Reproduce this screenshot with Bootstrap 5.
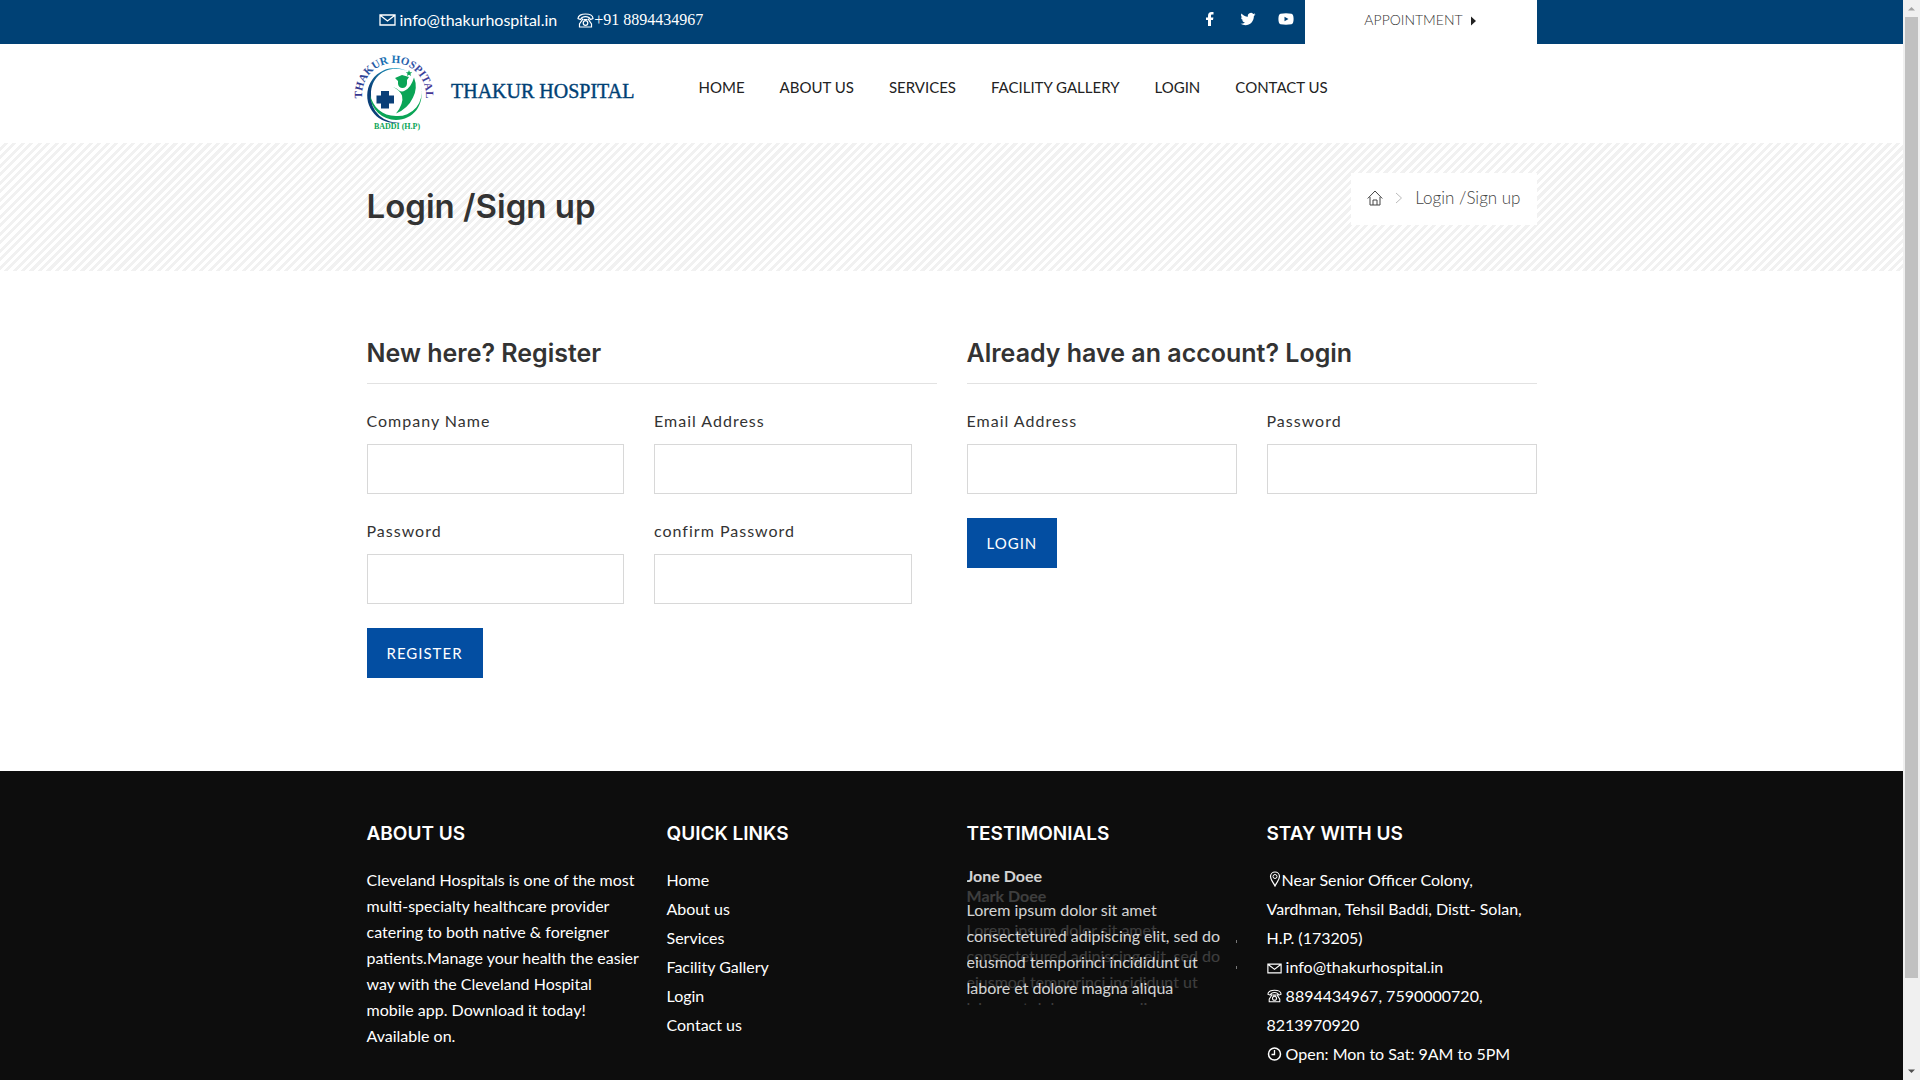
<!DOCTYPE html>
<html lang="en">
<head>
<meta charset="utf-8">
<meta name="viewport" content="width=device-width, initial-scale=1">
<title>Thakur Hospital - Login / Sign up</title>
<link href="https://cdn.jsdelivr.net/npm/bootstrap@5.3.0/dist/css/bootstrap.min.css" rel="stylesheet">
<style>
:root { --navy: #004175; --blue: #034ea2; --ink: #333; }
body { font-family: Lato, "Open Sans", sans-serif; font-size: 16px; line-height: 26px; color: var(--ink); padding-right: 17px; }
a { color: inherit; text-decoration: none; }
h1, h2, h3 { font-family: Inter, "Open Sans", sans-serif; font-weight: 600; margin: 0; }
.wrap { max-width: 1200px; padding-left: 15px; padding-right: 15px; }
.half { --bs-gutter-x: 30px; }
.topbar { background: var(--navy); color: #fff; height: 44px; line-height: 40px; }
.topbar .mail, .topbar .phone { height: 40px; }
.topbar .phone { font-family: "Liberation Serif", serif; }
.social { gap: 22px; padding-right: 11px; height: 38px; }
.appoint { background: #fff; color: var(--ink); width: 232px; height: 44px; font-size: 14px; font-weight: 300; }
.masthead { height: 99px; }
.brand { margin-left: -15px; width: 290px; }
.mainnav { gap: 35px; margin-left: 57px; padding-bottom: 14px; font-size: 15px; color: #222; }
.band { background: repeating-linear-gradient(135deg, #fff 0 3px, #f1f1f1 3px 6px); height: 128px; }
.band h1 { font-size: 33px; line-height: 40px; padding-top: 43px; }
.crumbs { background: #fff; height: 52px; margin-top: 30px; padding: 0 16px 2px; gap: 12px; font-size: 17px; font-weight: 300; color: #444; }
.forms { padding-top: 62px; padding-bottom: 93px; }
.forms h2 { font-size: 25px; line-height: 40px; padding-bottom: 10px; border-bottom: 1px solid #e2e2e2; margin-bottom: 24px; }
.forms label { display: block; font-size: 16px; letter-spacing: 1px; line-height: 26px; margin-bottom: 10px; }
.forms .form-control { border-radius: 0; border: 1px solid #d8d8d8; height: 50px; margin-bottom: 24px; }
.inset { padding-right: 25px; }
.act { background: var(--blue); color: #fff; border: 0; height: 50px; padding: 0 20px; font-size: 15px; letter-spacing: 1px; }
.foot { background: #0d0d0d; color: #fff; padding-top: 48px; padding-bottom: 12px; }
.foot h3 { font-size: 19px; line-height: 30px; margin-bottom: 18px; }
.foot .loose { line-height: 29px; margin: -2px 0 0; }
.foot .loose svg { vertical-align: -1px; }
.slides { position: relative; overflow: hidden; height: 139px; margin-top: -1px; }
.slide-item { opacity: .82; }
.slide-item b { display: block; line-height: 20px; margin-bottom: 11px; }
.ghost { position: absolute; top: 20px; left: 0; right: 0; opacity: .2; }
.upcoming { position: absolute; right: 0; width: 1px; height: 3px; background: #777; }
.upcoming.one { top: 74px; }
.upcoming.two { top: 100px; }
.rail { position: fixed; top: 0; right: 0; bottom: 0; width: 17px; background: #f0f0f0; padding: 0 2px; }
.rail .thumb { flex: 0 1 961px; background: #c1c1c1; }
.rail svg { margin-left: -2px; flex: none; }
</style>
<script src="https://cdn.jsdelivr.net/npm/bootstrap@5.3.0/dist/js/bootstrap.bundle.min.js"></script>
</head>
<body class="d-flex flex-column min-vh-100">
<svg width="0" height="0" class="position-absolute" aria-hidden="true">
  <symbol id="i-mail" viewBox="0 0 17 12"><path d="M1 1h15v10H1zM1.500 1.500l7 5.500 7-5.500" fill="none" stroke="currentColor" stroke-width="1.300"/></symbol>
  <symbol id="i-phone" viewBox="0 0 17 15"><path d="M1 5.500C1 2.500 4.500 1 8.500 1S16 2.500 16 5.500L13.500 6.500 12 4.500C10 3.500 7 3.500 5 4.500L3.500 6.500zM5.500 5.500v1L2.500 11v3h12v-3l-3-4.500v-1M6.500 6.500h4" fill="none" stroke="currentColor" stroke-width="1.200"/><circle cx="8.500" cy="10" r="2.300" fill="none" stroke="currentColor" stroke-width="1.200"/></symbol>
</svg>

<div class="topbar">
  <div class="container-fluid wrap d-flex">
    <a class="mail d-flex align-items-center ps-2" href="mailto:info@thakurhospital.in"><svg class="ms-1 me-1" width="17" height="12"><use href="#i-mail"/></svg>info@thakurhospital.in</a>
    <a class="phone d-flex align-items-center ms-3 ps-1" href="tel:+918894434967"><svg width="17" height="15"><use href="#i-phone"/></svg>+91 8894434967</a>
    <div class="social d-flex align-items-center ms-auto">
      <a href="#" aria-label="Facebook"><svg class="d-block" width="16" height="14" viewBox="-2 0 16 14"><path fill="#fff" d="M4 14V8H2V5.400h2V4c0-2.500 1.200-4 3.600-4H9.500v2.600H8.200C7.300 2.600 7 3 7 3.800v1.600h2.400L9 8H7v6z"/></svg></a>
      <a href="#" aria-label="Twitter"><svg class="d-block" width="16" height="14" viewBox="0 0 16 13"><path fill="#fff" d="M15.500 1.800c-.5.300-1.100.5-1.700.5.600-.4 1-.9 1.300-1.600-.6.400-1.200.6-1.900.7a3.100 3.100 0 0 0-5.300 2.800C5.300 4.100 3 2.900 1.500 1c-.9 1.500-.4 3.200.9 4.100-.5 0-1-.1-1.400-.4 0 1.500 1 2.700 2.500 3-.5.200-.9.200-1.400.1.400 1.200 1.500 2.100 2.900 2.100A6.200 6.200 0 0 1 .5 11.300C7 15 14 11 13.900 3.400c.6-.4 1.200-1 1.600-1.600z"/></svg></a>
      <a href="#" aria-label="YouTube"><svg class="d-block" width="16" height="12" viewBox="0 0 16 12"><path fill="#fff" fill-rule="evenodd" d="M2.500.7Q8 0 13.500.7 15.500 1 15.600 6q-.1 5-2.100 5.300Q8 12 2.500 11.300.5 11 .4 6 .5 1 2.500.7zM6.500 3.800v4.400L10.500 6z"/></svg></a>
    </div>
    <a class="appoint d-flex justify-content-center align-items-start" href="#">APPOINTMENT<svg class="ms-2" width="6" height="40" viewBox="0 0 6 40"><path d="M0 16.500v9L5 21z" fill="#222"/></svg></a>
  </div>
</div>

<header class="masthead">
  <div class="container-fluid wrap d-flex align-items-center h-100">
    <a class="brand" href="#" aria-label="Thakur Hospital">
      <svg class="d-block" width="290" height="90" viewBox="0 0 290 90">
        <defs>
          <linearGradient id="ring" x1="0" y1="0" x2="1" y2="0"><stop offset="0" stop-color="#3a2a88"/><stop offset=".45" stop-color="#1579b8"/><stop offset="1" stop-color="#4a2d91"/></linearGradient>
          <linearGradient id="moon" x1="0" y1="1" x2=".8" y2="0"><stop offset=".4" stop-color="#0a3f78"/><stop offset="1" stop-color="#1b9fc4"/></linearGradient>
          <path id="arc" d="M11 54A32 32 0 1 1 73 54"/>
        </defs>
        <text font-family="Liberation Serif, serif" font-weight="700" font-size="11" fill="url(#ring)" text-anchor="middle"><textPath href="#arc" startOffset="50%">THAKUR HOSPITAL</textPath></text>
        <path d="M57 23A27.500 27.500 0 1 0 50 73 26 26 0 0 1 19 45C19 24 40 14 57 23z" fill="url(#moon)"/>
        <path d="M18 46A26 26 0 0 0 44 71C61 71 73 56 69 37A24 24 0 0 1 44 67C30 67 21 58 18 46z" fill="#0aa556"/>
        <path d="M29 42h8v4.500h5v8h-5v5h-8v-5h-4.500v-8H29z" fill="#0a3f78"/>
        <path d="M43 29l7-3 7 2-2 3v3.500a4.500 4.500 0 0 1-9 0V32z" fill="#0aa556"/>
        <path d="M41 38q4 1 6 3.500 3 2 6 0 6-3 9-13 4 10-1 20-5 11-17 16 8-10 6-18-2-5-9-8.500z" fill="#0aa556"/>
        <path d="M57 21l.9 2.200h2.300l-1.800 1.500.7 2.300-2.100-1.300-2.100 1.300.7-2.300-1.800-1.500h2.300z" fill="#0aa556"/>
        <text x="45" y="80" font-family="Liberation Serif, serif" font-weight="700" font-size="8" fill="#0aa556" text-anchor="middle">BADDI (H.P)</text>
        <text x="99" y="49" font-family="Liberation Serif, serif" font-size="20" fill="#004175" stroke="#004175" stroke-width=".4">THAKUR HOSPITAL</text>
      </svg>
    </a>
    <nav class="mainnav d-flex">
      <a href="#">HOME</a><a href="#">ABOUT US</a><a href="#">SERVICES</a><a href="#">FACILITY GALLERY</a><a href="#">LOGIN</a><a href="#">CONTACT US</a>
    </nav>
  </div>
</header>

<section class="band">
  <div class="container-fluid wrap d-flex justify-content-between align-items-start">
    <h1>Login /Sign up</h1>
    <nav class="crumbs d-flex align-items-center" aria-label="breadcrumb">
      <a href="#" aria-label="Home"><svg class="d-block" width="16" height="16" viewBox="0 0 16 16"><path d="M.7 8.500L8 1l7.300 7.500M3 7v8h10V7M6 15v-5h4v5" fill="none" stroke="#444"/></svg></a>
      <svg width="8" height="12" viewBox="0 0 8 12"><path d="M1 1l5.500 5L1 11" fill="none" stroke="#bbb"/></svg>
      <span>Login /Sign up</span>
    </nav>
  </div>
</section>

<main class="container-fluid wrap forms">
  <div class="row half">
    <section class="col-md-6">
      <h2>New here? Register</h2>
      <form class="inset">
        <div class="row half">
          <div class="col-sm-6"><label for="company">Company Name</label><input class="form-control" id="company" type="text"></div>
          <div class="col-sm-6"><label for="email">Email Address</label><input class="form-control" id="email" type="email"></div>
          <div class="col-sm-6"><label for="pass">Password</label><input class="form-control" id="pass" type="password"></div>
          <div class="col-sm-6"><label for="confirm">confirm Password</label><input class="form-control" id="confirm" type="password"></div>
        </div>
        <button class="act" type="button">REGISTER</button>
      </form>
    </section>
    <section class="col-md-6">
      <h2>Already have an account? Login</h2>
      <form>
        <div class="row half">
          <div class="col-sm-6"><label for="lemail">Email Address</label><input class="form-control" id="lemail" type="email"></div>
          <div class="col-sm-6"><label for="lpass">Password</label><input class="form-control" id="lpass" type="password"></div>
        </div>
        <button class="act" type="button">LOGIN</button>
      </form>
    </section>
  </div>
</main>

<footer class="foot flex-grow-1">
  <div class="container-fluid wrap">
    <div class="row half">
      <section class="col-md-3">
        <h3>ABOUT US</h3>
        <p class="mb-0 text-nowrap">Cleveland Hospitals is one of the most<br>multi-specialty healthcare provider<br>catering to both native &amp; foreigner<br>patients.Manage your health the easier<br>way with the Cleveland Hospital<br>mobile app. Download it today!<br>Available on.</p>
      </section>
      <section class="col-md-3">
        <h3>QUICK LINKS</h3>
        <ul class="list-unstyled loose">
          <li><a href="#">Home</a></li><li><a href="#">About us</a></li><li><a href="#">Services</a></li><li><a href="#">Facility Gallery</a></li><li><a href="#">Login</a></li><li><a href="#">Contact us</a></li>
        </ul>
      </section>
      <section class="col-md-3">
        <h3>TESTIMONIALS</h3>
        <div class="slides">
          <div class="slide-item ghost"><b>Mark Doee</b>Lorem ipsum dolor sit amet<br>consectetured adipiscing elit, sed do<br>eiusmod temporinci incididunt ut<br>labore et dolore magna aliqua</div>
          <div class="slide-item"><b>Jone Doee</b>Lorem ipsum dolor sit amet<br>consectetured adipiscing elit, sed do<br>eiusmod temporinci incididunt ut<br>labore et dolore magna aliqua</div>
          <i class="upcoming one"></i><i class="upcoming two"></i>
        </div>
      </section>
      <section class="col-md-3">
        <h3>STAY WITH US</h3>
        <address class="loose">
          <svg width="15" height="16" viewBox="-2 0 15 16"><path d="M6 15C4 11 1.500 8.500 1.500 5.500a4.500 4.500 0 0 1 9 0C10.500 8.500 8 11 6 15z" fill="none" stroke="#fff" stroke-width="1.200"/><circle cx="6" cy="5.500" r="2" fill="none" stroke="#fff"/></svg>Near Senior Officer Colony,<br>Vardhman, Tehsil Baddi, Distt- Solan,<br>H.P. (173205)<br>
          <svg width="15" height="11"><use href="#i-mail"/></svg> info@thakurhospital.in<br>
          <svg width="15" height="14"><use href="#i-phone"/></svg> 8894434967, 7590000720,<br>8213970920<br>
          <svg width="15" height="14" viewBox="0 0 15 14"><circle cx="7.500" cy="7" r="6" fill="none" stroke="#fff" stroke-width="1.500"/><path d="M7.500 3v4.500H4.500" fill="none" stroke="#fff" stroke-width="1.300"/></svg> Open: Mon to Sat: 9AM to 5PM
        </address>
      </section>
    </div>
  </div>
</footer>

<div class="rail d-flex flex-column" aria-hidden="true">
  <svg width="17" height="17"><path d="M5 10.500h7L8.500 7z" fill="#a3a3a3"/></svg>
  <div class="thumb"></div>
  <svg class="mt-auto" width="17" height="17"><path d="M5 6.500h7L8.500 10z" fill="#505050"/></svg>
</div>
</body>
</html>
